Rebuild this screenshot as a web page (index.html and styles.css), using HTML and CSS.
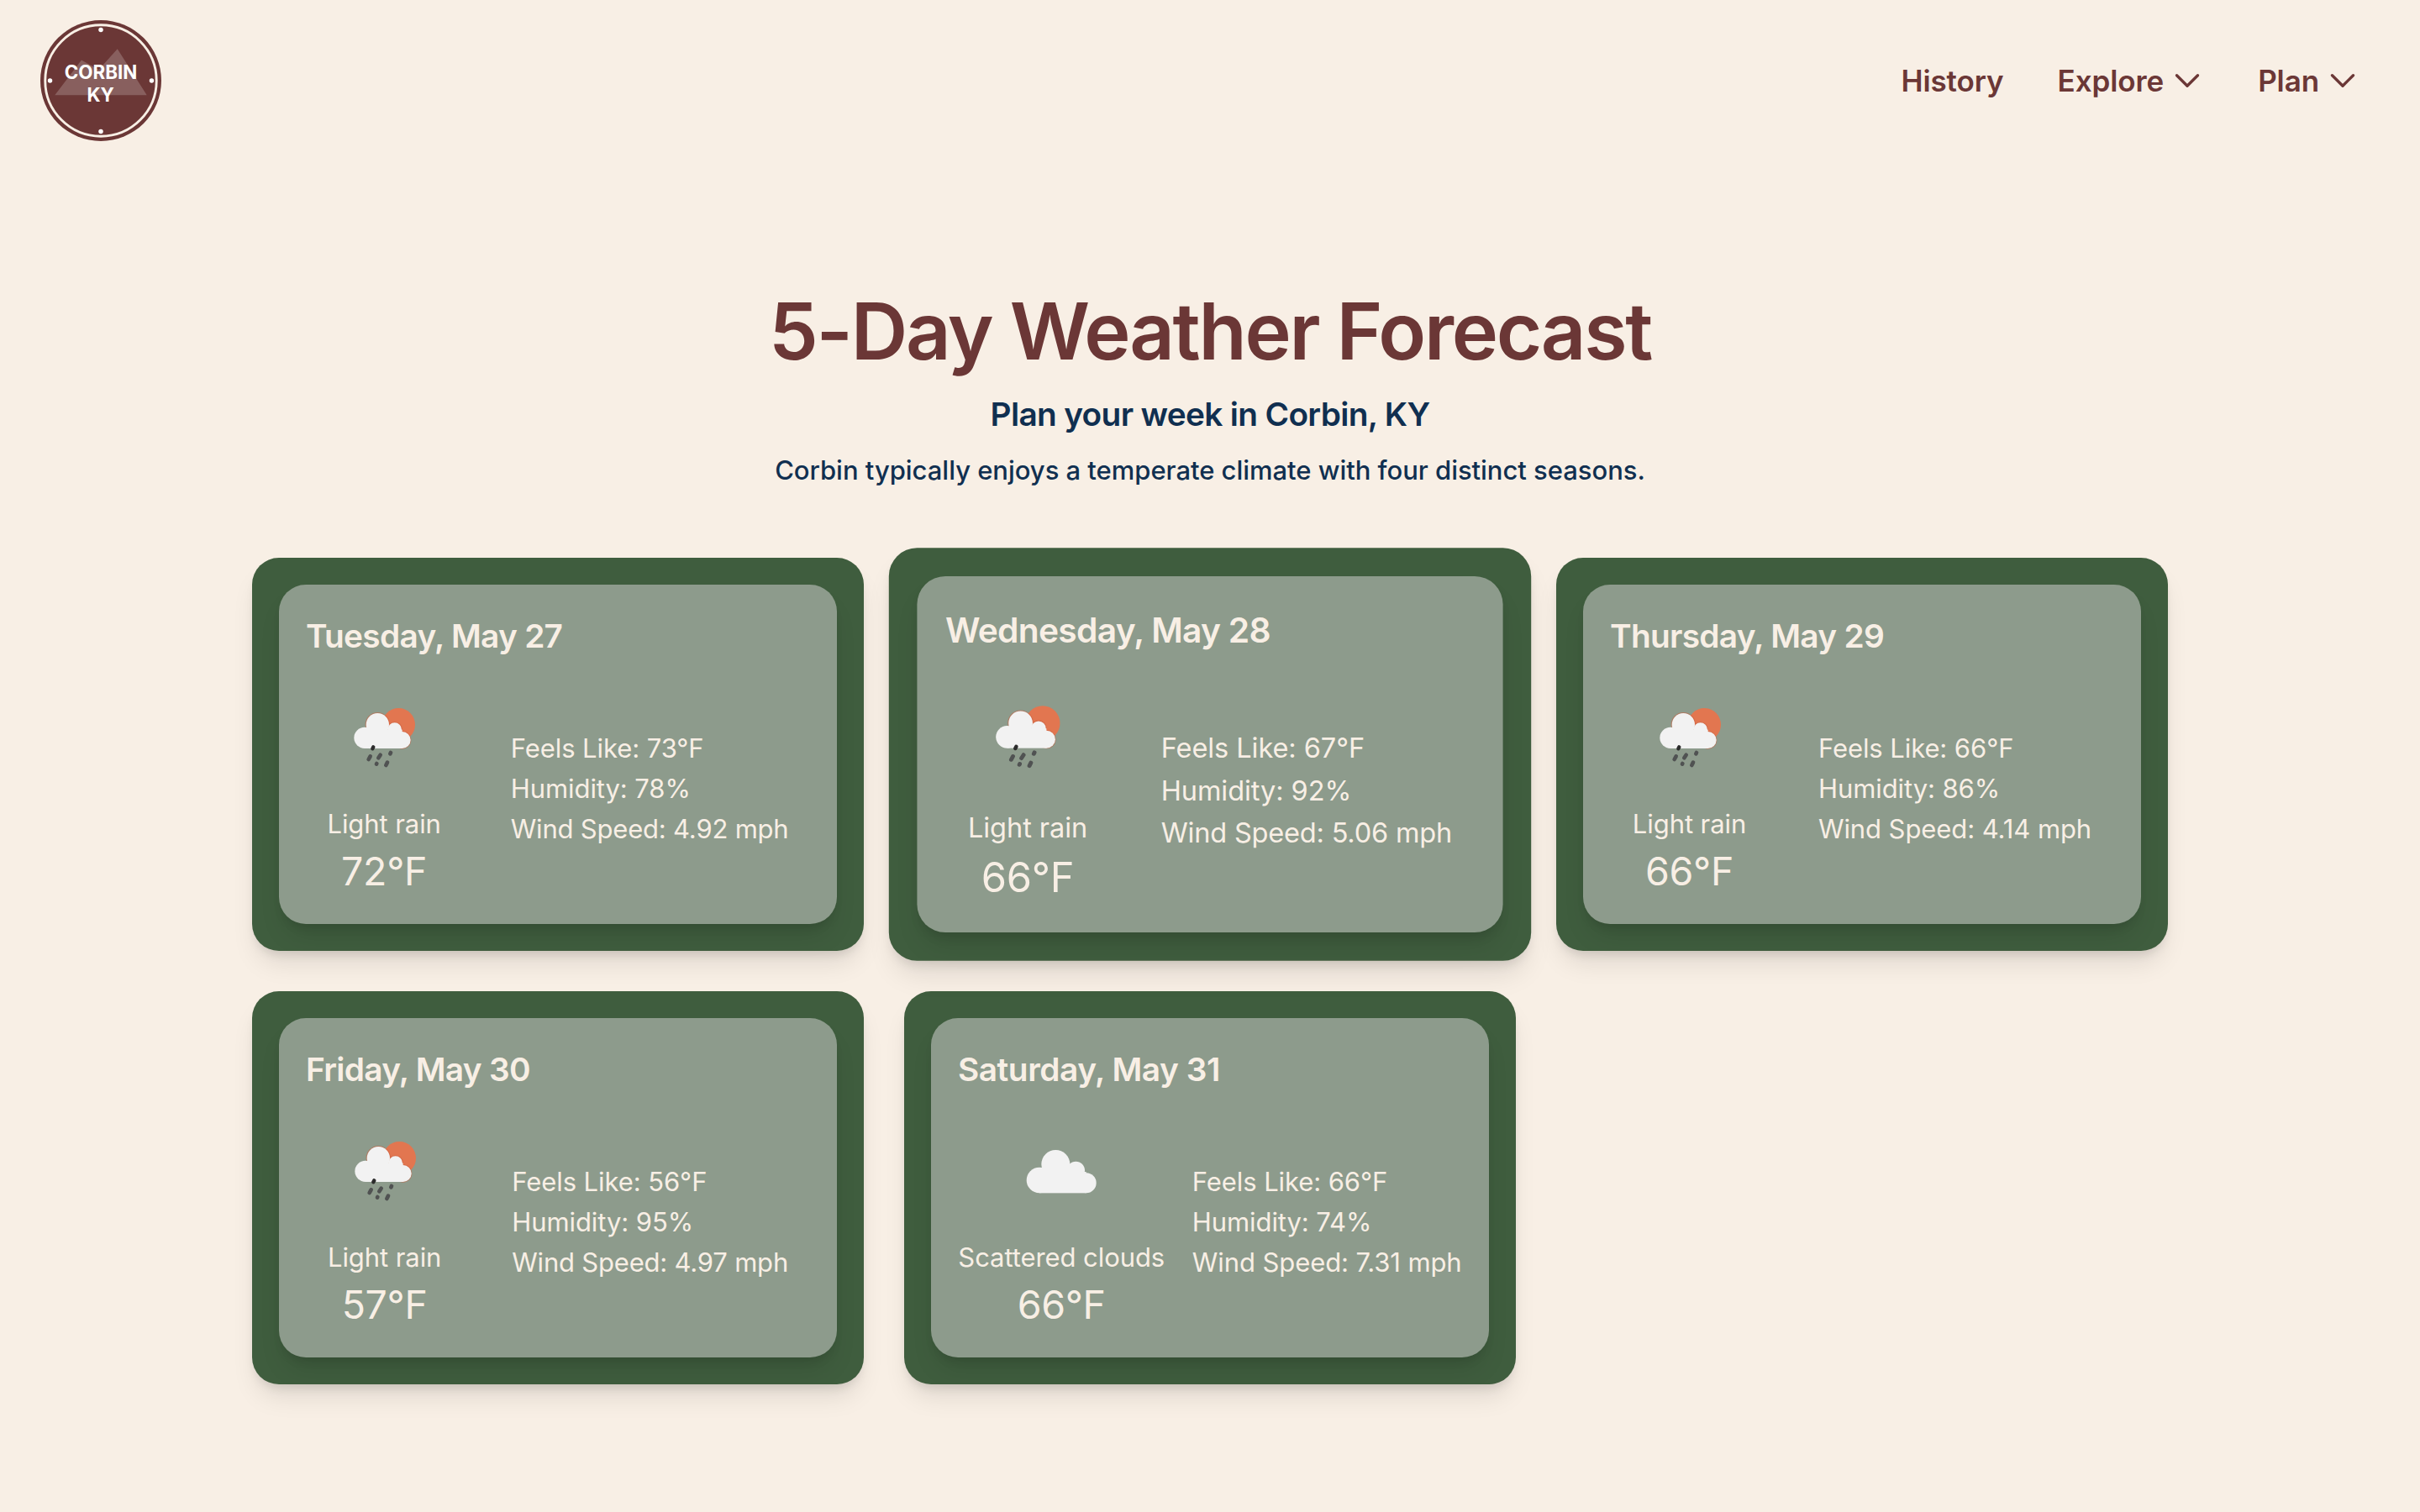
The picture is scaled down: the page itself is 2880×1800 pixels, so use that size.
FILE: index.html
```
<!DOCTYPE html>
<html lang="en">
<head>
<meta charset="utf-8">
<title>5-Day Weather Forecast | Corbin, KY</title>
<link rel="stylesheet" href="styles.css">
</head>
<body>
<svg class="sprite" aria-hidden="true">
  <symbol id="chevron" viewBox="0 0 24 24">
    <path d="m19.5 8.25-7.5 7.5-7.5-7.5" fill="none" stroke="currentColor" stroke-width="2" stroke-linecap="round" stroke-linejoin="round"/>
  </symbol>
  <symbol id="rain" viewBox="-17 -33 384 444">
    <circle cx="227" cy="128" r="59" fill="#e27650"/>
    <g fill="#c9603f" opacity=".55">
      <circle cx="152" cy="128" r="44"/>
      <circle cx="213" cy="145" r="27.5"/>
      <circle cx="240" cy="183" r="32"/>
    </g>
    <g fill="#f2f2f2">
      <circle cx="106" cy="175" r="38"/>
      <circle cx="152" cy="128" r="41"/>
      <circle cx="213" cy="146" r="25"/>
      <circle cx="240" cy="183" r="30"/>
      <rect x="106" y="146" width="134" height="67"/>
    </g>
    <g fill="none" stroke="#505252" stroke-width="14" stroke-linecap="round">
      <path d="M126 241 120 252M162 236 155 247M199 228 197 232M149 267 148 269M187 263 182 273"/>
      <path d="M137 208 134 214" stroke="#2c2c2c" stroke-width="13"/>
    </g>
  </symbol>
  <symbol id="clouds" viewBox="-1 -45 384 444">
    <g fill="#f2f2f2">
      <circle cx="113" cy="195" r="46"/>
      <circle cx="171" cy="138" r="51"/>
      <circle cx="243" cy="160" r="32"/>
      <circle cx="280" cy="205" r="36"/>
      <rect x="113" y="165" width="167" height="76"/>
    </g>
  </symbol>
</svg>

<header class="header">
  <a class="logo">
    <svg viewBox="0 0 100 100" width="144" height="144">
      <circle cx="50" cy="50" r="50" fill="#6b3736"/>
      <circle cx="50" cy="50" r="46" fill="none" stroke="#f8efe5" stroke-width="2"/>
      <path d="M12 62 34 33 48.3 41 63.7 23.7 88 62Z" fill="#fff" opacity=".2"/>
      <g fill="#fff">
        <circle cx="50" cy="8" r="1.9"/>
        <circle cx="92" cy="50" r="1.9"/>
        <circle cx="50" cy="92" r="1.9"/>
        <circle cx="8" cy="50" r="1.9"/>
        <text class="logo-text" x="50" y="48.7">CORBIN</text>
        <text class="logo-text" x="49.7" y="67.4">KY</text>
      </g>
    </svg>
  </a>
  <nav class="nav">
    <a class="nav-item">History</a>
    <a class="nav-item">Explore<svg class="chevron"><use href="#chevron"/></svg></a>
    <a class="nav-item">Plan<svg class="chevron"><use href="#chevron"/></svg></a>
  </nav>
</header>

<main class="main">
  <h1 class="title">5-Day Weather Forecast</h1>
  <h2 class="subtitle">Plan your week in Corbin, KY</h2>
  <p class="intro">Corbin typically enjoys a temperate climate with four distinct seasons.</p>

  <section class="grid">
    <article class="card">
      <div class="panel">
        <h3 class="day">Tuesday, May 27</h3>
        <div class="row">
          <div class="summary">
            <svg class="icon"><use href="#rain"/></svg>
            <p class="desc">Light rain</p>
            <p class="temp">72°F</p>
          </div>
          <div class="details">
            <p>Feels Like: 73°F</p>
            <p>Humidity: 78%</p>
            <p class="wind">Wind Speed: 4.92 mph</p>
          </div>
        </div>
      </div>
    </article>
    <article class="card card-active">
      <div class="panel">
        <h3 class="day">Wednesday, May 28</h3>
        <div class="row">
          <div class="summary">
            <svg class="icon"><use href="#rain"/></svg>
            <p class="desc">Light rain</p>
            <p class="temp">66°F</p>
          </div>
          <div class="details">
            <p>Feels Like: 67°F</p>
            <p>Humidity: 92%</p>
            <p class="wind">Wind Speed: 5.06 mph</p>
          </div>
        </div>
      </div>
    </article>
    <article class="card">
      <div class="panel">
        <h3 class="day">Thursday, May 29</h3>
        <div class="row">
          <div class="summary">
            <svg class="icon"><use href="#rain"/></svg>
            <p class="desc">Light rain</p>
            <p class="temp">66°F</p>
          </div>
          <div class="details">
            <p>Feels Like: 66°F</p>
            <p>Humidity: 86%</p>
            <p>Wind Speed: 4.14 mph</p>
          </div>
        </div>
      </div>
    </article>
    <article class="card">
      <div class="panel">
        <h3 class="day">Friday, May 30</h3>
        <div class="row">
          <div class="summary">
            <svg class="icon"><use href="#rain"/></svg>
            <p class="desc">Light rain</p>
            <p class="temp">57°F</p>
          </div>
          <div class="details">
            <p>Feels Like: 56°F</p>
            <p>Humidity: 95%</p>
            <p class="wind">Wind Speed: 4.97 mph</p>
          </div>
        </div>
      </div>
    </article>
    <article class="card">
      <div class="panel">
        <h3 class="day day-wide">Saturday, May 31</h3>
        <div class="row">
          <div class="summary">
            <svg class="icon"><use href="#clouds"/></svg>
            <p class="desc">Scattered clouds</p>
            <p class="temp">66°F</p>
          </div>
          <div class="details">
            <p>Feels Like: 66°F</p>
            <p>Humidity: 74%</p>
            <p>Wind Speed: 7.31 mph</p>
          </div>
        </div>
      </div>
    </article>
  </section>
</main>
</body>
</html>
```
FILE: styles.css
```
* {
  box-sizing: border-box;
  margin: 0;
  padding: 0;
}

body {
  min-height: 1800px;
  background: #f8efe5;
  color: #f8efe5;
  font-family: Inter, "Liberation Sans", sans-serif;
}

.sprite {
  display: none;
}

.header {
  display: flex;
  align-items: center;
  justify-content: space-between;
  height: 192px;
  padding: 0 72px 0 48px;
}

.logo svg {
  display: block;
}

.logo-text {
  font-size: 15.5px;
  font-weight: 700;
  text-anchor: middle;
}

.nav {
  display: flex;
  gap: 64px;
}

.nav-item {
  display: flex;
  align-items: center;
  gap: 8px;
  color: #6b3736;
  font-size: 35px;
  font-weight: 600;
  line-height: 56px;
  letter-spacing: -0.1px;
}

.chevron {
  width: 40px;
  height: 40px;
}

.main {
  padding: 154px 300px 0;
  text-align: center;
}

.title {
  color: #6b3736;
  font-size: 93.5px;
  font-weight: 600;
  line-height: 96px;
  letter-spacing: -2.28px;
}

.subtitle {
  margin-top: 23px;
  color: #102f50;
  font-size: 38.8px;
  font-weight: 600;
  line-height: 56px;
  letter-spacing: -0.67px;
}

.intro {
  margin-top: 15px;
  color: #102f50;
  font-size: 31px;
  font-weight: 500;
  line-height: 48px;
  letter-spacing: -0.03px;
}

.grid {
  display: grid;
  grid-template-columns: repeat(3, 728px);
  gap: 48px;
  margin-top: 80px;
  text-align: left;
}

.card {
  padding: 32px;
  border-radius: 32px;
  background: #3f5d3e;
  box-shadow: 0 20px 30px -6px rgba(0, 0, 0, 0.1), 0 8px 12px -4px rgba(0, 0, 0, 0.1);
}

.card-active {
  transform: scale(1.05);
}

.panel {
  height: 404px;
  padding: 32px;
  border-radius: 32px;
  background: #8d9b8c;
  box-shadow: 0 20px 30px -6px rgba(0, 0, 0, 0.1), 0 8px 12px -4px rgba(0, 0, 0, 0.1);
}

.day {
  font-size: 38.8px;
  font-weight: 600;
  line-height: 58px;
  letter-spacing: -0.7px;
}

.day-wide {
  letter-spacing: -0.45px;
}

.row {
  display: flex;
  align-items: center;
  justify-content: space-around;
  gap: 32px;
  height: 260px;
  margin-top: 23px;
  font-size: 31px;
  line-height: 48px;
  letter-spacing: -0.08px;
  white-space: nowrap;
}

.summary {
  display: flex;
  flex-direction: column;
  align-items: center;
}

.icon {
  width: 128px;
  height: 148px;
}

.temp {
  font-size: 46.5px;
  line-height: 64px;
  letter-spacing: -0.3px;
}

.wind {
  letter-spacing: -0.2px;
}
```
